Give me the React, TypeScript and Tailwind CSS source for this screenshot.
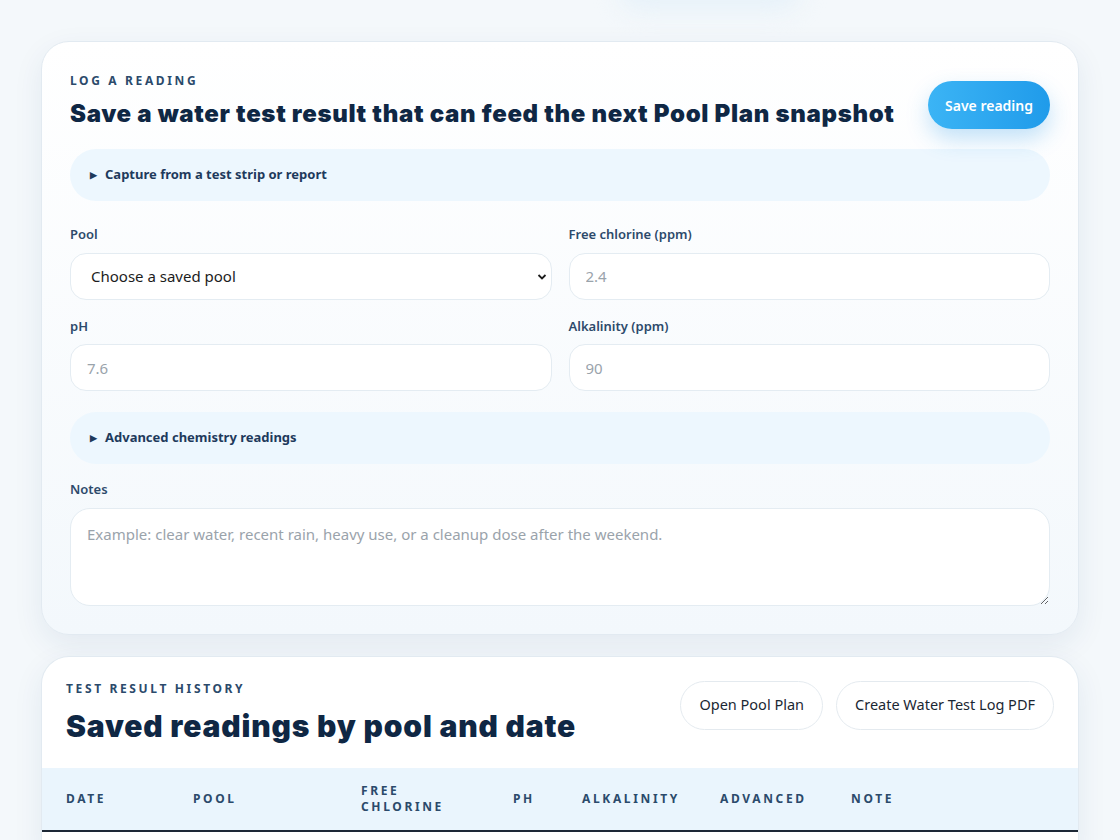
import React from "react";

const heading = "font-['Inter',sans-serif] font-black text-[#0f2744]";
const eyebrow = "text-[12px] font-bold uppercase tracking-[0.22em] text-[#2b4a6b]";

const fieldBox =
  "w-full h-[47px] rounded-[16px] border border-[#e4ecf2] bg-white px-4 text-[15px] text-[#1c1c1c] placeholder:text-[#9aa3ab] outline-none";

const Disclosure = ({ label }: { label: string }) => (
  <div className="flex h-[52px] items-center gap-2 rounded-full bg-[#edf7fe] px-5 text-[13px] font-bold text-[#1e3a5c]">
    <span className="text-[9px]">▶</span>
    <span>{label}</span>
  </div>
);

const Field = ({ label, placeholder }: { label: string; placeholder: string }) => (
  <label className="flex flex-col gap-[8px]">
    <span className="text-[13px] font-semibold text-[#2d4a6b]">{label}</span>
    <input className={fieldBox} placeholder={placeholder} />
  </label>
);

const columns = [
  { label: "Date", w: "w-[127px]" },
  { label: "Pool", w: "w-[168px]" },
  { label: "Free chlorine", w: "w-[152px]" },
  { label: "pH", w: "w-[69px]" },
  { label: "Alkalinity", w: "w-[138px]" },
  { label: "Advanced", w: "w-[131px]" },
  { label: "Note", w: "" },
];

const ghostButton =
  "h-[49px] rounded-full border border-[#e4eaef] bg-white px-[18px] text-[14.5px] text-[#1b2733]";

export default function App() {
  return (
    <div className="relative min-h-[840px] overflow-hidden bg-[#f4f8fb] font-['Noto_Sans',sans-serif]">
      {/* soft glow at the top edge */}
      <div className="pointer-events-none absolute -top-[30px] left-[620px] h-[40px] w-[180px] rounded-full bg-[#e6f1f9] blur-[12px]" />

      <div className="relative flex flex-col gap-[21px] px-[41px] pt-[41px]">
        {/* log a reading */}
        <section className="rounded-[28px] border border-[#e2eaf1] bg-gradient-to-b from-white to-[#f3f8fc] px-[28px] pb-[28px] pt-[30px] shadow-[0_10px_30px_rgba(30,70,110,0.08)]">
          <div className="flex items-start justify-between">
            <div>
              <p className={eyebrow}>Log a reading</p>
              <h1 className={`${heading} mt-[9px] text-[24px] leading-[30px] tracking-[0.028em]`}>
                Save a water test result that can feed the next Pool Plan snapshot
              </h1>
            </div>
            <button className="mt-[9px] h-[48px] rounded-full bg-gradient-to-r from-[#3bb4f5] to-[#1f9bea] px-[17px] text-[14px] font-semibold text-white shadow-[0_10px_22px_rgba(40,150,230,0.28)]">
              Save reading
            </button>
          </div>

          <div className="mt-[20px]">
            <Disclosure label="Capture from a test strip or report" />
          </div>

          <div className="mt-[24px] grid grid-cols-2 gap-x-[17px] gap-y-[17px]">
            <label className="flex flex-col gap-[8px]">
              <span className="text-[13px] font-semibold text-[#2d4a6b]">Pool</span>
              <div className="relative">
                <select className={`${fieldBox} appearance-none px-5 text-[15px]`} defaultValue="">
                  <option value="">Choose a saved pool</option>
                </select>
                <svg
                  className="pointer-events-none absolute right-[5px] top-[20px]"
                  width="10"
                  height="8"
                  viewBox="0 0 10 8"
                >
                  <path d="M1.5 2 L5 5.5 L8.5 2" fill="none" stroke="#1c1c1c" strokeWidth="1.8" />
                </svg>
              </div>
            </label>
            <Field label="Free chlorine (ppm)" placeholder="2.4" />
            <Field label="pH" placeholder="7.6" />
            <Field label="Alkalinity (ppm)" placeholder="90" />
          </div>

          <div className="mt-[21px]">
            <Disclosure label="Advanced chemistry readings" />
          </div>

          <label className="mt-[16px] flex flex-col gap-[8px]">
            <span className="text-[13px] font-semibold text-[#2d4a6b]">Notes</span>
            <textarea
              className="h-[98px] w-full rounded-[20px] border border-[#e4ecf2] bg-white px-4 py-[14px] text-[15px] text-[#1c1c1c] placeholder:text-[#9aa3ab] outline-none"
              placeholder="Example: clear water, recent rain, heavy use, or a cleanup dose after the weekend."
            />
          </label>
        </section>

        {/* history */}
        <section className="overflow-hidden rounded-t-[28px] border border-b-0 border-[#e2eaf1] bg-white shadow-[0_10px_30px_rgba(30,70,110,0.08)]">
          <div className="flex items-start justify-between px-[24px] pb-[23px] pt-[23px]">
            <div>
              <p className={eyebrow}>Test result history</p>
              <h2 className={`${heading} mt-[9px] text-[30px] leading-[38px] tracking-[0.028em]`}>
                Saved readings by pool and date
              </h2>
            </div>
            <div className="flex gap-[13px] pt-[1px]">
              <button className={ghostButton}>Open Pool Plan</button>
              <button className={ghostButton}>Create Water Test Log PDF</button>
            </div>
          </div>
          <div className="flex h-[64px] items-center border-b-2 border-[#1d2836] bg-[#eaf5fd] px-[24px]">
            {columns.map((c) => (
              <div key={c.label} className={`${c.w} ${eyebrow} leading-[16px] tracking-[0.2em]`}>
                {c.label === "Free chlorine" ? (
                  <>
                    Free
                    <br />
                    chlorine
                  </>
                ) : (
                  c.label
                )}
              </div>
            ))}
          </div>
          <div className="h-[20px]" />
        </section>
      </div>
    </div>
  );
}
